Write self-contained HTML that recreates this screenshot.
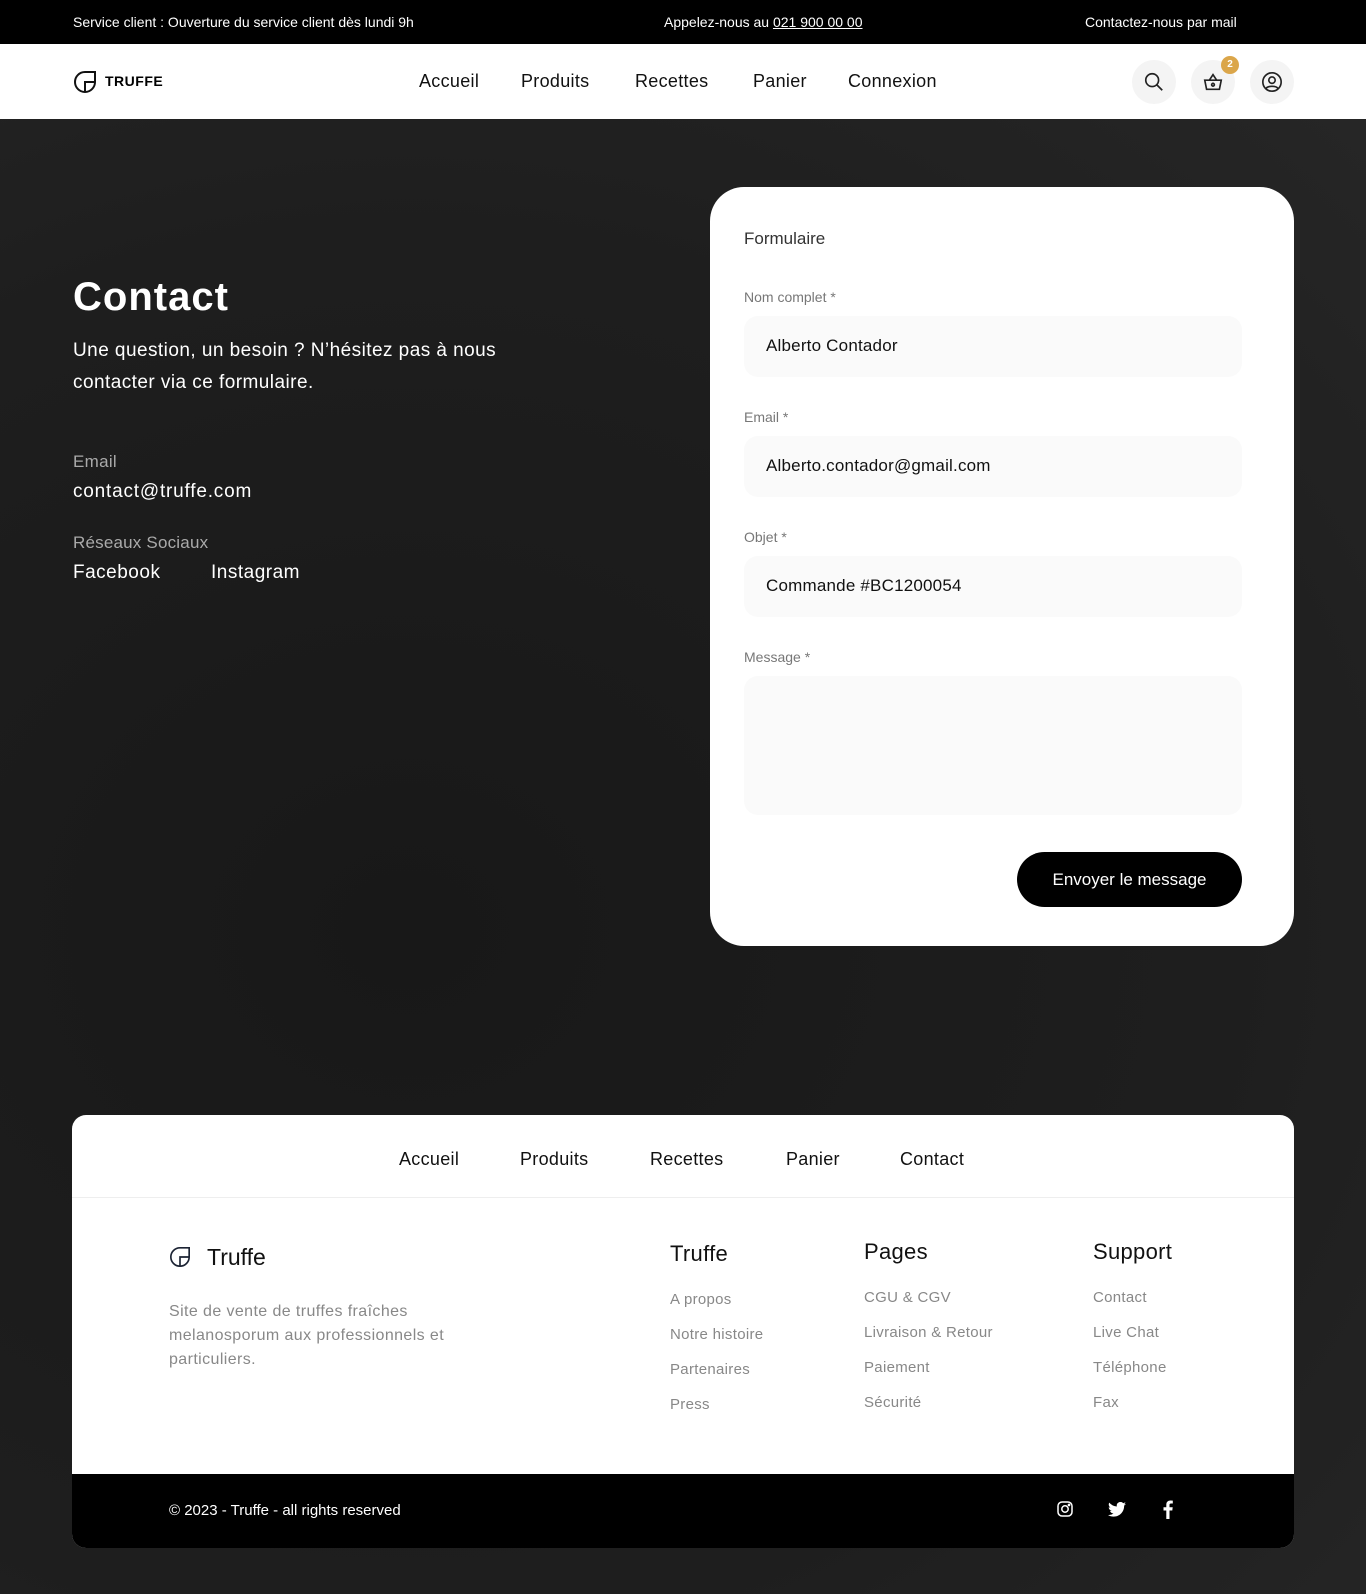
<!DOCTYPE html>
<html><head><meta charset="utf-8"><style>
*{margin:0;padding:0;box-sizing:border-box}
body{width:1366px;height:1594px;position:relative;font-family:"Liberation Sans",sans-serif;background:#1c1c1c;overflow:hidden}
.a{position:absolute;white-space:nowrap}
.top{left:0;top:0;width:1366px;height:44px;background:#000;color:#fff;font-size:14px}
.top span{position:absolute;top:14px}
.nav{left:0;top:44px;width:1366px;height:75px;background:#fff}
.nav a{position:absolute;top:27px;font-size:18px;color:#111;text-decoration:none;letter-spacing:.3px}
.circ{position:absolute;top:16px;width:44px;height:44px;border-radius:50%;background:#f4f4f4;display:flex;align-items:center;justify-content:center}
.hero{left:0;top:119px;width:1366px;height:1475px;background:radial-gradient(ellipse at 30% 55%,#181818,#1e1e1e 60%,#262626)}
.card{left:710px;top:187px;width:584px;height:759px;background:#fff;border-radius:34px}
.lbl{font-size:14px;color:#777}
.inp{position:absolute;left:34px;width:498px;height:61px;background:#fafafa;border-radius:14px;font-size:17px;color:#111;padding:20px 22px;letter-spacing:.2px}
.fcard{left:72px;top:1115px;width:1222px;height:433px;background:#fff;border-radius:14px;overflow:hidden}
.fn{position:absolute;top:1149px;font-size:18px;color:#111;letter-spacing:.3px}
.ft{font-size:22px;color:#111;letter-spacing:.3px}
.fi{font-size:15px;color:#888;letter-spacing:.3px}
</style></head><body>
<div class="a top"><span style="left:73px">Service client : Ouverture du service client dès lundi 9h</span><span style="left:664px">Appelez-nous au <u>021 900 00 00</u></span><span style="left:1085px">Contactez-nous par mail</span></div>
<div class="a nav">
<svg style="position:absolute;left:73px;top:26px" width="24" height="24" viewBox="0 0 24 24" fill="none" stroke="#111" stroke-width="2"><path d="M12 2H22V12A10 10 0 0 1 12 22A10 10 0 0 1 2 12A10 10 0 0 1 12 2Z"/><path d="M12 22V12H22"/></svg>
<span style="position:absolute;left:105px;top:29px;font-weight:bold;font-size:14px;letter-spacing:.5px">TRUFFE</span>
<a style="left:419px">Accueil</a><a style="left:521px">Produits</a><a style="left:635px">Recettes</a><a style="left:753px">Panier</a><a style="left:848px">Connexion</a>
<div class="circ" style="left:1132px"><svg width="22" height="22" viewBox="0 0 24 24" fill="none" stroke="#222" stroke-width="1.8"><circle cx="10" cy="10" r="7"/><path d="M15 15l6 6"/></svg></div>
<div class="circ" style="left:1191px"><svg width="22" height="22" viewBox="0 0 24 24" fill="none" stroke="#222" stroke-width="1.8"><path d="M3 10h18l-2 10H5z"/><path d="M8 10l4-6 4 6"/><circle cx="12" cy="15" r="1.5"/></svg></div>
<div style="position:absolute;left:1221px;top:12px;width:18px;height:18px;border-radius:50%;background:#dba64a;color:#fff;font-size:10px;font-weight:bold;text-align:center;line-height:18px">2</div>
<div class="circ" style="left:1250px"><svg width="22" height="22" viewBox="0 0 24 24" fill="none" stroke="#222" stroke-width="1.8"><circle cx="12" cy="12" r="10"/><circle cx="12" cy="10" r="3.5"/><path d="M5.5 19c2-3 11-3 13 0"/></svg></div>
</div>
<div class="a hero"></div>
<div class="a" style="left:73px;top:275px;font-size:40px;font-weight:bold;color:#fff;letter-spacing:1px">Contact</div>
<div class="a" style="left:73px;top:335px;font-size:19px;color:#fff;line-height:32px;letter-spacing:.45px">Une question, un besoin ? N’hésitez pas à nous<br>contacter via ce formulaire.</div>
<div class="a" style="left:73px;top:452px;font-size:17px;color:#aaa;letter-spacing:.3px">Email</div>
<div class="a" style="left:73px;top:481px;font-size:19px;color:#fff;letter-spacing:.8px">contact@truffe.com</div>
<div class="a" style="left:73px;top:533px;font-size:17px;color:#aaa;letter-spacing:.2px">Réseaux Sociaux</div>
<div class="a" style="left:73px;top:562px;font-size:19px;color:#fff;letter-spacing:.5px">Facebook</div>
<div class="a" style="left:211px;top:562px;font-size:19px;color:#fff;letter-spacing:.5px">Instagram</div>
<div class="a card">
<div class="a" style="left:34px;top:42px;font-size:17px;color:#333">Formulaire</div>
<div class="a lbl" style="left:34px;top:102px">Nom complet *</div><div class="inp" style="top:129px">Alberto Contador</div>
<div class="a lbl" style="left:34px;top:222px">Email *</div><div class="inp" style="top:249px">Alberto.contador@gmail.com</div>
<div class="a lbl" style="left:34px;top:342px">Objet *</div><div class="inp" style="top:369px">Commande #BC1200054</div>
<div class="a lbl" style="left:34px;top:462px">Message *</div><div class="inp" style="top:489px;height:139px"></div>
<div class="a" style="left:307px;top:665px;width:225px;height:55px;background:#000;border-radius:28px;color:#fff;font-size:17px;text-align:center;line-height:55px">Envoyer le message</div>
</div>
<div class="a fcard">
<div style="position:absolute;left:0;top:82px;width:100%;height:1px;background:#eee"></div>
<div style="position:absolute;left:0;top:359px;width:100%;height:74px;background:#000"></div>
</div>
<div class="fn" style="left:399px">Accueil</div><div class="fn" style="left:520px">Produits</div><div class="fn" style="left:650px">Recettes</div><div class="fn" style="left:786px">Panier</div><div class="fn" style="left:900px">Contact</div>
<svg class="a" style="left:169px;top:1246px" width="22" height="22" viewBox="0 0 24 24" fill="none" stroke="#1b2333" stroke-width="1.8"><path d="M12 2H22V12A10 10 0 0 1 12 22A10 10 0 0 1 2 12A10 10 0 0 1 12 2Z"/><path d="M12 22V12H22"/></svg>
<div class="a" style="left:207px;top:1244px;font-size:23px;color:#111">Truffe</div>
<div class="a" style="left:169px;top:1300px;font-size:16px;color:#888;line-height:24px;letter-spacing:.4px">Site de vente de truffes fraîches<br>melanosporum aux professionnels et<br>particuliers.</div>
<div class="a ft" style="left:670px;top:1241px">Truffe</div>
<div class="a fi" style="left:670px;top:1291px">A propos</div><div class="a fi" style="left:670px;top:1326px">Notre histoire</div><div class="a fi" style="left:670px;top:1361px">Partenaires</div><div class="a fi" style="left:670px;top:1396px">Press</div>
<div class="a ft" style="left:864px;top:1239px">Pages</div>
<div class="a fi" style="left:864px;top:1289px">CGU &amp; CGV</div><div class="a fi" style="left:864px;top:1324px">Livraison &amp; Retour</div><div class="a fi" style="left:864px;top:1359px">Paiement</div><div class="a fi" style="left:864px;top:1394px">Sécurité</div>
<div class="a ft" style="left:1093px;top:1239px">Support</div>
<div class="a fi" style="left:1093px;top:1289px">Contact</div><div class="a fi" style="left:1093px;top:1324px">Live Chat</div><div class="a fi" style="left:1093px;top:1359px">Téléphone</div><div class="a fi" style="left:1093px;top:1394px">Fax</div>
<div class="a" style="left:169px;top:1502px;font-size:15px;color:#fff">© 2023 - Truffe - all rights reserved</div>
<svg class="a" style="left:1057px;top:1501px" width="16" height="16" viewBox="0 0 16 16" fill="none" stroke="#fff" stroke-width="1.5"><rect x="1" y="1" width="14" height="14" rx="4"/><circle cx="8" cy="8" r="3.2"/><circle cx="12" cy="4" r=".6" fill="#fff"/></svg>
<svg class="a" style="left:1108px;top:1502px" width="18" height="15" viewBox="0 0 24 20" fill="#fff"><path d="M24 2.4a10 10 0 0 1-2.8.8A5 5 0 0 0 23.3.4a10 10 0 0 1-3.1 1.2A4.9 4.9 0 0 0 11.8 6 14 14 0 0 1 1.7.9a4.9 4.9 0 0 0 1.5 6.6 4.9 4.9 0 0 1-2.2-.6 4.9 4.9 0 0 0 3.9 4.9 4.9 4.9 0 0 1-2.2.1 4.9 4.9 0 0 0 4.6 3.4A9.9 9.9 0 0 1 0 17.3 14 14 0 0 0 7.5 19.5c9 0 14-7.5 14-14v-.6A10 10 0 0 0 24 2.4z"/></svg>
<svg class="a" style="left:1163px;top:1500px" width="10" height="19" viewBox="0 0 10 19" fill="#fff"><path d="M6.5 19V10.5h2.8l.4-3.3H6.5V5.1c0-1 .3-1.6 1.6-1.6H9.8V.6A23 23 0 0 0 7.4.5C5 .5 3.3 2 3.3 4.7v2.5H.5v3.3h2.8V19z"/></svg>
</body></html>
